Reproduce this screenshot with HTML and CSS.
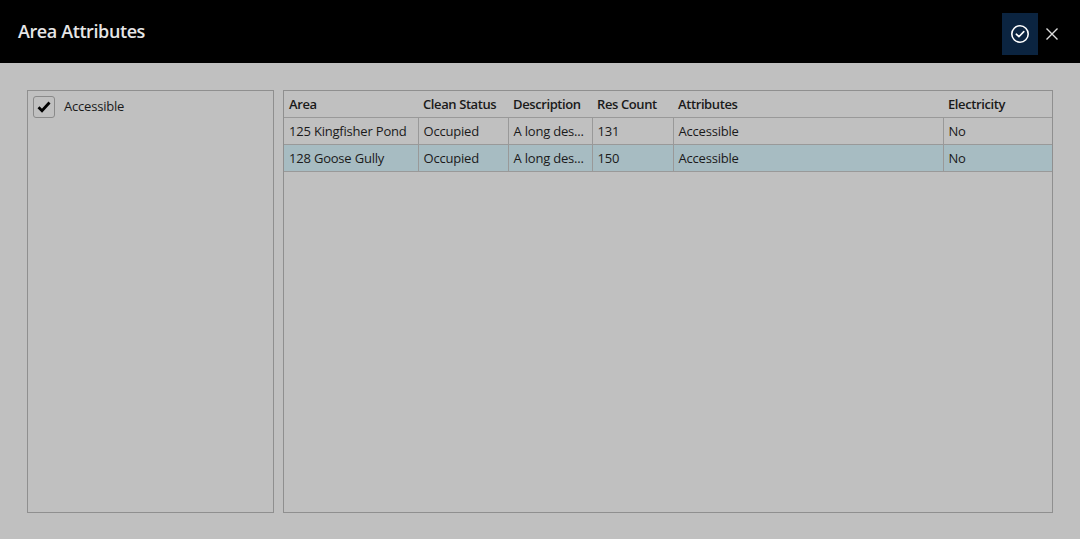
FILE: index.html
```html
<!DOCTYPE html>
<html>
<head>
<meta charset="utf-8">
<link rel="stylesheet" href="styles.css">
</head>
<body>
<div class="topbar">
  <div class="title">Area Attributes</div>
  <div class="actions">
    <button class="confirm" aria-label="Confirm">
      <svg width="20" height="20" viewBox="0 0 20 20"><circle cx="10" cy="10" r="8.2" fill="none" stroke="#fff" stroke-width="1.6"/><path d="M6.3 10.2 L8.9 12.7 L13.8 7.6" fill="none" stroke="#fff" stroke-width="1.6" stroke-linecap="round" stroke-linejoin="round"/></svg>
    </button>
    <button class="close" aria-label="Close">
      <svg width="14" height="14" viewBox="0 0 14 14"><path d="M1.5 1.5 L12.5 12.5 M12.5 1.5 L1.5 12.5" stroke="#ddd" stroke-width="1.4"/></svg>
    </button>
  </div>
</div>
<div class="content">
  <div class="panel left">
    <label class="check-row">
      <span class="box"><svg width="14" height="12" viewBox="0 0 14 12"><path d="M1.5 6.3 L5 9.8 L12.5 1.5" fill="none" stroke="#000" stroke-width="2.8" stroke-linejoin="miter"/></svg></span>
      <span class="label">Accessible</span>
    </label>
  </div>
  <div class="panel right">
    <table class="grid">
      <colgroup>
        <col class="c-area"><col class="c-clean"><col class="c-desc"><col class="c-res"><col class="c-attr"><col>
      </colgroup>
      <thead>
        <tr><th>Area</th><th>Clean Status</th><th>Description</th><th>Res Count</th><th>Attributes</th><th>Electricity</th></tr>
      </thead>
      <tbody>
        <tr><td>125 Kingfisher Pond</td><td>Occupied</td><td>A long des...</td><td>131</td><td>Accessible</td><td>No</td></tr>
        <tr class="selected"><td>128 Goose Gully</td><td>Occupied</td><td>A long des...</td><td>150</td><td>Accessible</td><td>No</td></tr>
      </tbody>
    </table>
  </div>
</div>
</body>
</html>
```
FILE: styles.css
```css
html, body {
  margin: 0;
  padding: 0;
  height: 100%;
}
body {
  background: #c0c0c0;
  font-family: "Open Sans", "Noto Sans", sans-serif;
  font-size: 13px;
  letter-spacing: -0.2px;
  color: #1a1a1a;
  display: flex;
  flex-direction: column;
}
.topbar {
  height: 63px;
  background: #000;
  display: flex;
  align-items: center;
  justify-content: space-between;
  padding-left: 18px;
  padding-right: 14px;
  box-sizing: border-box;
  flex: none;
}
.title {
  color: #e6e6e6;
  font-size: 18px;
  font-weight: 600;
  letter-spacing: -0.4px;
  margin-top: -1px;
}
.actions {
  display: flex;
  align-items: center;
  height: 100%;
}
.confirm {
  width: 36px;
  height: 42px;
  background: #0b2440;
  border: none;
  padding: 0;
  display: flex;
  align-items: center;
  justify-content: center;
  margin-top: 5px;
}
.close {
  width: 28px;
  height: 42px;
  background: none;
  border: none;
  padding: 0;
  display: flex;
  align-items: center;
  justify-content: center;
  margin-top: 5px;
}
.content {
  flex: 1;
  display: flex;
  gap: 9px;
  padding: 27px 27px 26px 27px;
  box-sizing: border-box;
}
.panel {
  border: 1px solid #8f8f8f;
  box-sizing: border-box;
}
.left {
  width: 247px;
  flex: none;
  padding: 5px;
}
.right {
  flex: 1;
}
.check-row {
  display: flex;
  align-items: center;
  gap: 9px;
}
.box {
  width: 20px;
  height: 20px;
  border: 1px solid #8a8a8a;
  border-radius: 3px;
  display: flex;
  align-items: center;
  justify-content: center;
}
.label {
  margin-top: -2px;
}
.grid {
  width: 100%;
  border-collapse: collapse;
  table-layout: fixed;
}
.c-area { width: 134px; }
.c-clean { width: 90px; }
.c-desc { width: 84px; }
.c-res { width: 81px; }
.c-attr { width: 270px; }
.grid th {
  text-align: left;
  font-weight: 600;
  letter-spacing: -0.4px;
  height: 26px;
  padding: 0 5px;
  border-bottom: 1px solid #999;
  white-space: nowrap;
  overflow: hidden;
}
.grid td {
  height: 26px;
  padding: 0 5px;
  border-bottom: 1px solid #999;
  border-left: 1px solid #999;
  white-space: nowrap;
  overflow: hidden;
}
.grid td:first-child {
  border-left: none;
}
.grid tr.selected td {
  background: #a7bcc2;
}
```
